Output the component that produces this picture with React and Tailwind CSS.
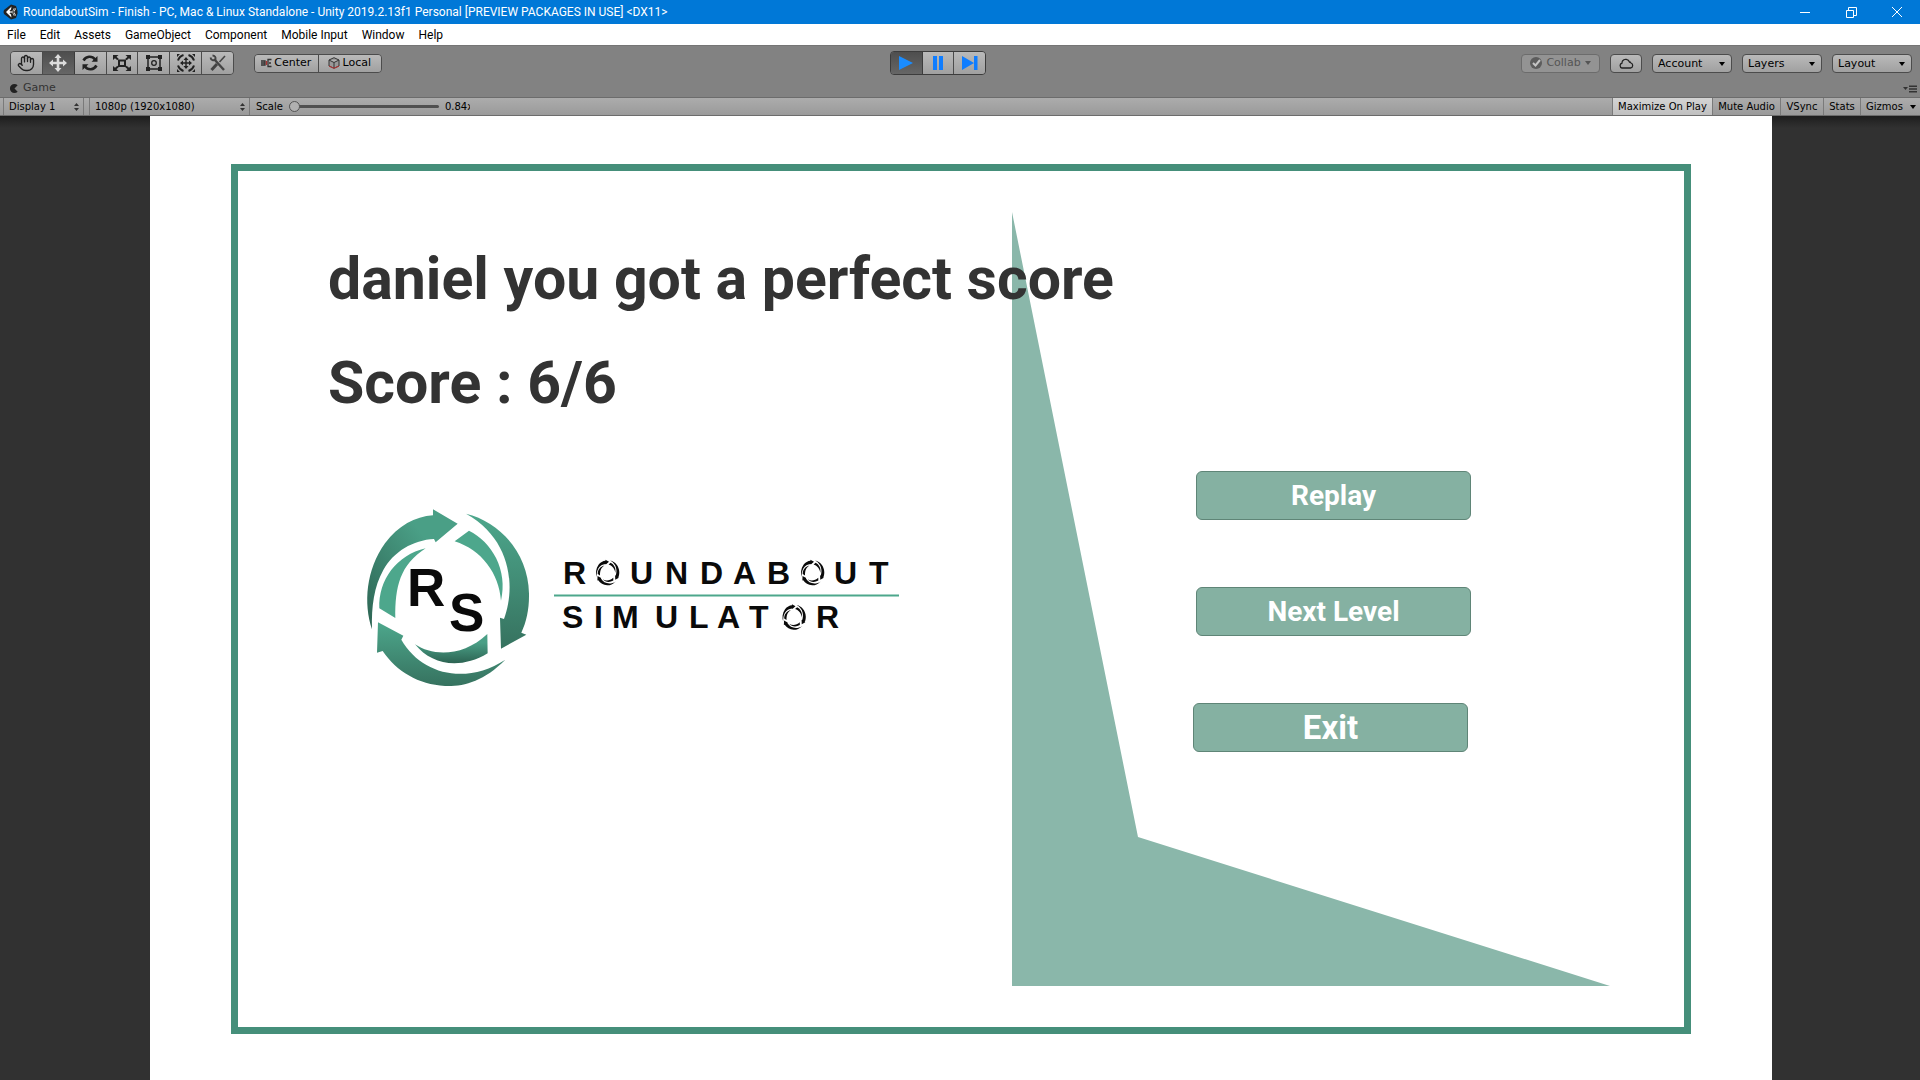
import React from "react";
import { Hand } from "lucide-react";

const UNITY = "font-['DejaVu_Sans',sans-serif]";

const raised = "border-[#4c4c4c] bg-linear-to-b from-[#bababa] to-[#a0a0a0]";
const pressed = "border-[#3c3c3c] bg-linear-to-b from-[#4e4e4e] to-[#666]";

function UnityLogo() {
  return (
    <svg viewBox="0 0 16 16" className="size-4" aria-hidden="true">
      <path d="M8 0.5 13 2 14.5 7 14.5 9.500 13 14 8 15.500 1 10 0.500 8 1 6Z" fill="#222" />
      <path d="M3 8 8.500 2.500 8 5.500 6.300 7 9.500 7 11 4 13 4.500 11.300 8 13 11.500 11 12 9.500 9 6.300 9 8 10.500 8.500 13.500Z" fill="#fff" />
      <path d="M7 8H12M10 8 12 4M10 8 12 12" stroke="#222" strokeWidth="0.800" fill="none" />
    </svg>
  );
}

function Down({ className = "" }) {
  return (
    <svg viewBox="0 0 6 4" className={`h-1 w-1.5 ${className}`} aria-hidden="true">
      <path d="M0 0H6L3 4Z" fill="currentColor" />
    </svg>
  );
}

function UpDown() {
  return (
    <svg viewBox="0 0 5 8" className="pointer-events-none absolute right-1 top-1/2 h-2 w-[5px] -translate-y-1/2" aria-hidden="true">
      <path d="M0 3 2.500 0 5 3ZM0 5 2.500 8 5 5Z" fill="#333" />
    </svg>
  );
}

const svg = "size-5";

const tools = [
  { name: "Hand", icon: <Hand className="size-[18px] text-[#222]" strokeWidth={1.8} /> },
  {
    name: "Move",
    active: true,
    icon: (
      <svg viewBox="0 0 20 20" className={svg} fill="#dcdcdc">
        <path d="M10 1 13.500 5H11.300V8.700H15V6.500L19 10 15 13.500V11.300H11.300V15H13.500L10 19 6.500 15H8.700V11.300H5V13.500L1 10 5 6.500V8.700H8.700V5H6.500Z" />
      </svg>
    ),
  },
  {
    name: "Rotate",
    icon: (
      <svg viewBox="0 0 20 20" className={svg} fill="none" stroke="#222" strokeWidth="2.6">
        <path d="M3.500 7.500C6 3 12 2.500 15 6.500M16.500 12.500C14 17 8 17.500 5 13.500" />
        <path d="M17.500 3V8.800H11.500ZM2.500 17V11.200H8.500Z" fill="#222" stroke="none" />
      </svg>
    ),
  },
  {
    name: "Scale",
    icon: (
      <svg viewBox="0 0 20 20" className={svg} fill="none" stroke="#222" strokeWidth="2">
        <path d="M7 7.500H13V13H7ZM2 3 6 6.500M18 3 14 6.500M2 17 6 13.500M18 17 14 13.500" />
        <path d="M1 2H6.500L1 7ZM19 2H13.500L19 7ZM1 18H6.500L1 13ZM19 18H13.500L19 13Z" fill="#222" stroke="none" />
      </svg>
    ),
  },
  {
    name: "Rect",
    icon: (
      <svg viewBox="0 0 20 20" className={svg} fill="none" stroke="#222" strokeWidth="1.5">
        <path d="M4 4H16V16H4Z" />
        <circle cx="10" cy="10" r="2.300" strokeWidth="1.3" />
        <path d="M2 2H6V6H2ZM14 2H18V6H14ZM2 14H6V18H2ZM14 14H18V18H14Z" fill="#222" stroke="none" />
      </svg>
    ),
  },
  {
    name: "Transform",
    icon: (
      <svg viewBox="0 0 20 20" className={svg} fill="none" stroke="#222" strokeWidth="2">
        <path d="M7.500 2A8.500 8.500 0 0 0 2 7.500M12.500 2A8.500 8.500 0 0 1 18 7.500M7.500 18A8.500 8.500 0 0 1 2 12.500M12.500 18A8.500 8.500 0 0 0 18 12.500" />
        <path d="M10 6V14M6 10H14" strokeWidth="1.4" />
        <path d="M10 4 12.500 7H7.500ZM10 16 12.500 13H7.500ZM4 10 7 7.500V12.500ZM16 10 13 7.500V12.500ZM1 1H4L1 4ZM19 1H16L19 4ZM1 19H4L1 16ZM19 19H16L19 16Z" fill="#222" stroke="none" />
      </svg>
    ),
  },
  {
    name: "Custom tools",
    icon: (
      <svg viewBox="0 0 20 20" className={svg} fill="none" stroke="#444">
        <path d="M6 6 16 17" strokeWidth="2.400" />
        <path d="M2.500 4.500C3 7.500 5.500 8 7.500 6.500 8 4.500 7 2.500 4.500 2.500" strokeWidth="1.800" />
        <path d="M17 3 11.500 9" strokeWidth="1.600" />
        <path d="M9 11 3.500 17" strokeWidth="3" />
      </svg>
    ),
  },
];

function ToolGroup() {
  return (
    <div className="flex h-6 w-56 overflow-hidden rounded-sm border border-[#4c4c4c]">
      {tools.map((t) => (
        <button
          key={t.name}
          aria-label={t.name}
          className={`flex flex-1 items-center justify-center border-r last:border-r-0 ${t.active ? pressed : raised}`}
        >
          {t.icon}
        </button>
      ))}
    </div>
  );
}

function PlayGroup() {
  return (
    <div className="mr-[46px] flex h-6 w-24 overflow-hidden rounded-sm border border-[#3c3c3c]">
      <button aria-label="Play" className={`flex flex-1 items-center justify-center border-r ${pressed}`}>
        <svg viewBox="0 0 16 16" className="size-4"><path d="M1 1 15 8 1 15Z" fill="#1a8cff" /></svg>
      </button>
      <button aria-label="Pause" className={`flex flex-1 items-center justify-center border-r ${raised}`}>
        <svg viewBox="0 0 16 16" className="size-4"><path d="M3 1H7V15H3ZM9 1H13V15H9Z" fill="#0f7dff" /></svg>
      </button>
      <button aria-label="Step" className={`flex flex-1 items-center justify-center ${raised}`}>
        <svg viewBox="0 0 16 16" className="size-4"><path d="M0 1 12 8 0 15ZM12 1H15.500V15H12Z" fill="#0f7dff" /></svg>
      </button>
    </div>
  );
}

function ToolbarSelect({ label }) {
  return (
    <div className="relative h-[19px] w-20">
      <select aria-label={label} className={`size-full appearance-none rounded-sm border pl-[5px] text-[11px] leading-none text-black ${raised}`}>
        <option>{label}</option>
      </select>
      <Down className="pointer-events-none absolute right-[7px] top-2" />
    </div>
  );
}

function GameSelect({ label, value, className }) {
  return (
    <div className={`relative h-full border-x border-[#7a7a7a] ${className}`}>
      <select aria-label={label} className="block size-full appearance-none pl-[5px] text-[10px] text-black">
        <option>{value}</option>
      </select>
      <UpDown />
    </div>
  );
}

function Ring({ green, ...rest }) {
  const a = green ? "url(#arrowLeft)" : "#0a0a0a";
  const b = green ? "url(#arrowDown)" : "#0a0a0a";
  const c = green ? "#4da78c" : "#0a0a0a";
  const d = green ? "url(#innerBottom)" : "#0a0a0a";
  return (
    <g {...rest}>
      <path fill={a} d="M66 418C40 340 48 240 105 160C145 107 195 80 249 76V58L323 101 257 157 252 147C190 150 130 185 100 240C72 290 64 350 66 418Z" />
      <path fill={b} d="M348 71C450 95 535 190 537 310C538 355 530 395 514 428L529 434 453 476 450 383 462 387C495 300 490 150 348 71Z" />
      <path fill={b} d="M466 509C400 575 340 590 285 588C205 583 140 545 98 483L81 488 84 397 160 437 154 449C215 555 350 585 466 509Z" />
      <path fill={c} d="M227 175C140 195 85 270 88 355L136 384C135 290 150 225 227 175Z" />
      <path fill={c} d="M357 122C425 155 475 240 453 332C447 250 395 180 314 154Z" />
      <path fill={d} d="M195 463C250 500 340 500 412 432L413 490C330 540 245 525 195 463Z" />
    </g>
  );
}

function RoundaboutLogo() {
  return (
    <svg viewBox="0 0 560 220" className="h-[220px] w-[560px]" role="img" aria-label="Roundabout Simulator">
      <defs>
        <linearGradient id="arrowLeft" x1="1" y1="0" x2="0" y2="1">
          <stop offset="0.300" stopColor="#4a9f86" />
          <stop offset="1" stopColor="#2c6352" />
        </linearGradient>
        <linearGradient id="arrowDown" x1="0" y1="0" x2="0" y2="1">
          <stop offset="0" stopColor="#4da78c" />
          <stop offset="1" stopColor="#36725f" />
        </linearGradient>
        <linearGradient id="innerBottom" x1="0" y1="0" x2="0" y2="1">
          <stop offset="0.300" stopColor="#4a9f86" />
          <stop offset="1" stopColor="#2c6352" />
        </linearGradient>
      </defs>
      <Ring green transform="scale(0.3333)" />
      <g fill="#0a0a0a" className="font-['Liberation_Sans',sans-serif] text-[53px] font-bold">
        <text x="57" y="116">R</text>
        <text x="99" y="141">S</text>
      </g>
      <g fill="#0a0a0a" className="font-['Liberation_Sans',sans-serif] text-[32px] font-bold">
        <text x="213" y="94">R</text>
        <text x="280 315 350 383 417" y="94">UNDAB</text>
        <text x="484 519" y="94">UT</text>
        <text x="212 244 262 305 339 367 399" y="138">SIMULAT</text>
        <text x="466" y="138">R</text>
      </g>
      <Ring transform="translate(243.500 67) scale(0.048)" />
      <Ring transform="translate(448.500 67) scale(0.048)" />
      <Ring transform="translate(430 111.500) scale(0.048)" />
      <path d="M204 105.500H549" stroke="#4da78c" strokeWidth="2" />
    </svg>
  );
}

const gameButton =
  "h-[49px] w-[275px] rounded-md border border-[#5f8577] bg-[#85b1a2] font-bold text-white flex items-center justify-center";

export default function App() {
  return (
    <div className="flex min-h-screen flex-col bg-[#313131]">
      <header className="flex h-6 items-center bg-[#0078d7] pl-[3px] font-['Roboto',sans-serif] text-[12px] text-white">
        <UnityLogo />
        <h1 className="ml-1 flex-1 whitespace-nowrap">
          RoundaboutSim - Finish - PC, Mac &amp; Linux Standalone - Unity 2019.2.13f1 Personal [PREVIEW PACKAGES IN USE] &lt;DX11&gt;
        </h1>
        <div className="flex h-full">
          <button aria-label="Minimize" className="flex w-[46px] items-center justify-center">
            <svg viewBox="0 0 10 10" className="size-2.5" stroke="#fff"><path d="M0 5.500H10" /></svg>
          </button>
          <button aria-label="Restore" className="flex w-[46px] items-center justify-center">
            <svg viewBox="0 0 11 11" className="size-[11px]" stroke="#fff" fill="none"><path d="M0.500 3.500H7.500V10.500H0.500ZM2.500 3.500V0.500H10.500V8.500H7.500" /></svg>
          </button>
          <button aria-label="Close" className="flex w-[46px] items-center justify-center">
            <svg viewBox="0 0 10 10" className="size-2.5" stroke="#fff"><path d="M0 0 10 10M10 0 0 10" /></svg>
          </button>
        </div>
      </header>

      <nav className="flex h-[21px] items-center gap-3.5 bg-white pl-[7px] font-['Roboto',sans-serif] text-[12px] text-black">
        {["File", "Edit", "Assets", "GameObject", "Component", "Mobile Input", "Window", "Help"].map((m) => (
          <button key={m} className="whitespace-nowrap">{m}</button>
        ))}
      </nav>

      <div className={`grid h-[35px] grid-cols-[1fr_auto_1fr] items-center border-t border-[#757575] bg-[#828282] pl-2.5 pr-2 text-[11px] text-black ${UNITY}`}>
        <div className="flex items-center gap-5">
          <ToolGroup />
          <div className="flex h-[19px] w-32 overflow-hidden rounded-sm border border-[#4c4c4c]">
            <button className={`flex flex-1 items-center justify-center gap-0.5 border-r ${raised}`}>
              <svg viewBox="0 0 11 10" className="h-2.5 w-[11px]" fill="none" stroke="#333" strokeWidth="1.300">
                <path d="M0 3H4V7H0M0 5H4M10.500 1.500H7V8.500H10.500M8 5H10" />
                <path d="M5.500 3V7" stroke="#a33" />
              </svg>
              Center
            </button>
            <button className={`flex flex-1 items-center justify-center gap-0.5 ${raised}`}>
              <svg viewBox="0 0 12 12" className="size-3" fill="#999" stroke="#333">
                <path d="M6 0.700 11 3V9L6 11.300 1 9V3ZM1 3 6 5.500 11 3M6 5.500V11" />
                <path d="M1 9 6 11.300 11 9" stroke="#b33" fill="none" />
              </svg>
              Local
            </button>
          </div>
        </div>
        <PlayGroup />
        <div className="flex items-center justify-end gap-2.5">
          <button disabled className="flex h-[19px] w-[79px] items-center justify-center gap-1 rounded-sm border border-[#6c6c6c] bg-[#939393] text-[#555]">
            <svg viewBox="0 0 12 12" className="size-3"><circle cx="6" cy="6" r="6" fill="#5c5c5c" /><path d="M3 6 5.500 8.500 10 3" stroke="#c4c4c4" strokeWidth="2" fill="none" /></svg>
            Collab
            <Down />
          </button>
          <button aria-label="Cloud services" className={`flex h-[19px] w-8 items-center justify-center rounded-sm border ${raised}`}>
            <svg viewBox="0 0 16 12" className="h-3 w-4" fill="none" stroke="#222" strokeWidth="1.300">
              <path d="M4 11H12.500A2.600 2.600 0 0 0 13 6C12.500 5 12 5 11.500 5A4 4 0 0 0 4.500 4C4 5 4 5.500 4 6A2.600 2.600 0 0 0 4 11Z" />
            </svg>
          </button>
          <ToolbarSelect label="Account" />
          <ToolbarSelect label="Layers" />
          <ToolbarSelect label="Layout" />
        </div>
      </div>

      <div className={`flex h-[17px] items-center justify-between bg-[#828282] pl-2.5 pr-[3px] text-[11px] text-[#333] ${UNITY}`}>
        <button className="flex items-center gap-1">
          <svg viewBox="0 0 10 10" className="size-[9px]"><path d="M8.500 1.500A5 5 0 1 0 8.500 8.500L5 5Z" fill="#222" /></svg>
          Game
        </button>
        <button aria-label="Tab options">
          <svg viewBox="0 0 14 8" className="h-2 w-3.5"><path d="M0 2H5L2.500 5ZM6 0.500H14V2H6ZM6 3.300H14V4.800H6ZM6 6H14V7.500H6Z" fill="#333" /></svg>
        </button>
      </div>

      <div className={`flex h-[19px] items-stretch border-y border-[#6c6c6c] bg-linear-to-b from-[#acacac] to-[#9a9a9a] pl-[3px] text-[10px] text-black ${UNITY}`}>
        <GameSelect label="Display" value="Display 1" className="w-[81px]" />
        <GameSelect label="Resolution" value="1080p (1920x1080)" className="ml-[5px] w-[161px]" />
        <label className="flex items-center gap-1.5 pl-1.5">
          Scale
          <input
            type="range"
            min="0.84"
            max="5"
            step="0.01"
            defaultValue="0.84"
            className="h-[11px] w-[150px] appearance-none bg-transparent [&::-webkit-slider-runnable-track]:h-[3px] [&::-webkit-slider-runnable-track]:rounded-full [&::-webkit-slider-runnable-track]:bg-[#505050] [&::-webkit-slider-thumb]:-mt-1 [&::-webkit-slider-thumb]:size-[11px] [&::-webkit-slider-thumb]:appearance-none [&::-webkit-slider-thumb]:rounded-full [&::-webkit-slider-thumb]:border [&::-webkit-slider-thumb]:border-[#555] [&::-webkit-slider-thumb]:bg-[#b0b0b0]"
          />
          <span className="w-[25px] overflow-hidden whitespace-nowrap">0.84x</span>
        </label>
        <div className="ml-auto flex *:border-l *:border-[#7a7a7a]">
          <button className="w-[100px] bg-linear-to-b from-[#d4d4d4] to-[#c0c0c0] whitespace-nowrap">Maximize On Play</button>
          <button className="w-[68px] whitespace-nowrap">Mute Audio</button>
          <button className="w-[43px]">VSync</button>
          <button className="w-[37px]">Stats</button>
          <button className="flex w-[60px] items-center justify-between pl-[5px] pr-1">
            Gizmos
            <Down />
          </button>
        </div>
      </div>

      <main className="flex flex-1 bg-linear-to-b from-[#1e1e1e] to-[#313131] to-[12px] pl-[150px] pr-[148px] font-['Roboto',sans-serif]">
        <div className="flex flex-1 bg-white px-[81px] pb-[46px] pt-12">
          <section className="relative flex flex-1 justify-between border-[7px] border-[#458f7a] pl-[90px] pr-[213px]">
            <svg
              viewBox="0 0 598 774"
              preserveAspectRatio="none"
              className="absolute bottom-[41px] left-[774px] h-[774px] w-[598px]"
              aria-hidden="true"
            >
              <path d="M0 0 126 625 598 774H0Z" fill="#8ab7aa" />
            </svg>
            <div className="relative w-[600px] pt-[72px] text-[59px] font-bold leading-[72px] text-[#333]">
              <h2 className="whitespace-nowrap">daniel you got a perfect score</h2>
              <p className="mt-8">Score : 6/6</p>
              <div className="ml-[22px] mt-[71px]">
                <RoundaboutLogo />
              </div>
            </div>
            <div className="relative flex w-[278px] flex-col items-end gap-[67px] pt-[300px]">
              <button className={`${gameButton} text-[28px]`}>Replay</button>
              <button className={`${gameButton} text-[28px]`}>Next Level</button>
              <button className={`${gameButton} self-start text-[33px]`}>Exit</button>
            </div>
          </section>
        </div>
      </main>
    </div>
  );
}
